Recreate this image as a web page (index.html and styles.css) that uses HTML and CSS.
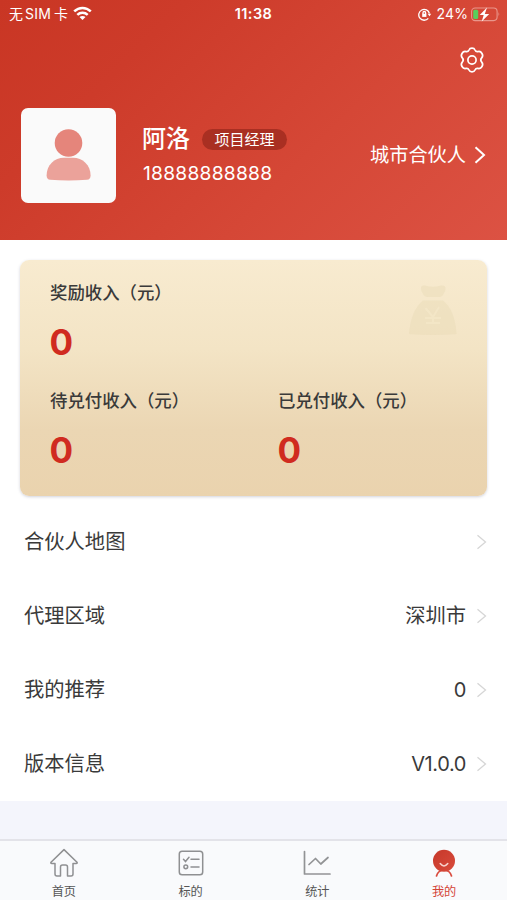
FILE: index.html
```html
<!DOCTYPE html>
<html lang="zh-CN">
<head>
<meta charset="utf-8">
<title>我的</title>
<link rel="stylesheet" href="styles.css">
</head>
<body>
<div class="app">
  <header class="hero">
    <div class="status">
      <div class="status-left">
        <span class="carrier">无<span class="sim">SIM</span>卡</span>
        <svg class="wifi" width="19" height="15" viewBox="0 0 19 15" fill="none" stroke="#fff" stroke-width="2.5"><path d="M1.2 5.4C6 .8 13 .8 17.8 5.4M4.3 8.8c3-2.800 7.400-2.800 10.400 0"/><path d="M6.500 11.100c1.800-1.600 4.200-1.600 6 0l-3 3z" fill="#fff" stroke="none"/></svg>
      </div>
      <div class="time">11:38</div>
      <div class="status-right">
        <svg width="14" height="13" viewBox="0 0 14 13" fill="none" stroke="#fff" stroke-width="1.300"><path d="M10.300 10.300A5.400 5.400 0 1 1 11.400 5.500"/><path d="M9.600 5.800h3.600l-1.700 2.500z" fill="#fff" stroke="none"/><path d="M5 6V4.800a1.300 1.300 0 0 1 2.600 0V6"/><path d="M4.200 5.700h4.200v3.200H4.200z" fill="#fff" stroke="none"/></svg>
        <span class="percent">24%</span>
        <svg class="battery" width="30" height="15" viewBox="0 0 30 15"><rect x=".6" y="1" width="25.500" height="12.600" rx="3.500" fill="none" stroke="#e9968b" stroke-width="1.100"/><path d="M27.500 5q1.800 2.300 0 4.600z" fill="#e9968b"/><rect x="2.200" y="2.700" width="5" height="9.200" rx="1.500" fill="#59cf5c"/><path d="M16 .4 8.700 8h4l-2 6.500L18.200 7h-4.400z" fill="#fff"/></svg>
      </div>
    </div>
    <div class="settings">
      <svg width="26" height="26" viewBox="0 0 26 26" fill="none" stroke="#fff" stroke-width="1.700" stroke-linejoin="round"><path d="M10 3q.7-1.800 3-1.800T16 3c.6 1.400 1.600 1.900 3 1.600 2-.5 3 .2 4 1.900s1 3-.3 4.400c-1 1.100-1 3.100 0 4.200 1.300 1.400 1.300 2.700.3 4.400s-2 2.400-4 1.900c-1.400-.3-2.400.2-3 1.600q-.7 1.800-3 1.800T10 23c-.6-1.400-1.600-1.900-3-1.600-2 .5-3-.2-4-1.900s-1-3 .3-4.400c1-1.100 1-3.100 0-4.200C2 9.500 2 8.200 3 6.500s2-2.400 4-1.900c1.400.3 2.400-.2 3-1.600z"/><circle cx="13" cy="13" r="4.100"/></svg>
    </div>
    <div class="profile">
      <div class="avatar">
        <svg width="46" height="54" viewBox="0 0 46 54"><circle cx="22.500" cy="15" r="13.800" fill="#e5857b"/><path d="M.6 47.500C.6 37 8.500 29.800 18 29.800h9c9.500 0 17.600 7.200 17.600 17.700q0 4-3.600 4.300-18.500 1.500-36.800 0Q.6 51.500.6 47.500z" fill="#eba29a"/></svg>
      </div>
      <div class="identity">
        <div class="name-row"><span class="name">阿洛</span><span class="role">项目经理</span></div>
        <div class="phone">18888888888</div>
      </div>
      <div class="partner"><span>城市合伙人</span>
        <svg width="12" height="18" viewBox="0 0 12 18" fill="none" stroke="#fff" stroke-width="2"><path d="M1.500 1.300 10 9l-8.500 7.700"/></svg>
      </div>
    </div>
  </header>

  <main class="content">
    <section class="card">
      <div class="stat stat-total"><div class="label">奖励收入（元）</div><div class="value">0</div></div>
      <div class="stat"><div class="label">待兑付收入（元）</div><div class="value">0</div></div>
      <div class="stat"><div class="label">已兑付收入（元）</div><div class="value">0</div></div>
      <svg class="bag" width="50" height="52" viewBox="0 0 50 52"><path d="M13 4q0-3 4-2.500 8 2.500 16 0 5-.5 4.500 3.500 0 2-1.500 4-1.500 4-5 4H20q-4 0-5.500-4Q13 7 13 4zM15 16.500h20Q47 26 48.500 50q-24 2-47.500 0Q3 26 15 16.500z" fill="#e9dcb8" fill-opacity=".5"/><path d="m17.500 24 7.500 9 6-10M25 33v7M17 34h16M18 39h14" fill="none" stroke="#f5e8c9" stroke-opacity=".7" stroke-width="2"/></svg>
    </section>

    <nav class="menu">
      <div class="item"><span>合伙人地图</span><span class="end"><svg class="chev" width="11" height="16" viewBox="0 0 11 16"><path d="m1.500 1.200 8 6.800-8 6.800"/></svg></span></div>
      <div class="item"><span>代理区域</span><span class="end">深圳市<svg class="chev" width="11" height="16" viewBox="0 0 11 16"><path d="m1.500 1.200 8 6.800-8 6.800"/></svg></span></div>
      <div class="item"><span>我的推荐</span><span class="end number">0<svg class="chev" width="11" height="16" viewBox="0 0 11 16"><path d="m1.500 1.200 8 6.800-8 6.800"/></svg></span></div>
      <div class="item"><span>版本信息</span><span class="end number">V1.0.0<svg class="chev" width="11" height="16" viewBox="0 0 11 16"><path d="m1.500 1.200 8 6.800-8 6.800"/></svg></span></div>
    </nav>
  </main>

  <footer class="tabs">
    <div class="tab">
      <svg width="30" height="30" viewBox="0 0 30 30" fill="none" stroke="#8f9092" stroke-width="1.500" stroke-linejoin="round"><path d="M15 1.600 2 14.200q-.7 1.300.8 1.300H6V26q0 2 2 2h3.500V19q0-2 2-2h3q2 0 2 2v9H22q2 0 2-2V15.500h3.200q1.500 0 .8-1.300z"/></svg>
      <span>首页</span>
    </div>
    <div class="tab">
      <svg width="30" height="30" viewBox="0 0 30 30" fill="none" stroke="#8f9092" stroke-width="1.500" stroke-linecap="round"><rect x="3.300" y="3.300" width="23.400" height="23.400" rx="2.800"/><path d="m7.500 11.300 2 2.200 3.500-4.200M15 11.300h8M15 19h8"/><circle cx="9.800" cy="18.800" r="1.900"/></svg>
      <span>标的</span>
    </div>
    <div class="tab">
      <svg width="30" height="30" viewBox="0 0 30 30" fill="none" stroke="#929395" stroke-width="1.700" stroke-linecap="round" stroke-linejoin="round"><path d="M2.500 3.500V26H28M7 16.500l6.500-6 5.300 5.500L26 9.500"/></svg>
      <span>统计</span>
    </div>
    <div class="tab active">
      <svg width="30" height="30" viewBox="0 0 30 30" fill="none"><defs><linearGradient id="face" x1="0" y1="0" x2="1" y2="1"><stop offset="0" stop-color="#c6382a"/><stop offset="1" stop-color="#d94b3c"/></linearGradient></defs><path d="M7.500 28q1.300-5.500 7.500-6 6.200.5 7.500 6" stroke="#d94b3e" stroke-width="1.700" stroke-linecap="round"/><circle cx="15" cy="12.700" r="11" fill="url(#face)"/><path d="M11.200 15.500q3.800 4.800 7.600 0" stroke="#f7d3cd" stroke-width="1.500" stroke-linecap="round"/></svg>
      <span>我的</span>
    </div>
  </footer>
</div>
</body>
</html>
```
FILE: styles.css
```css
* { box-sizing: border-box; }
body {
  margin: 0;
  font-family: Inter, "Noto Sans CJK SC", sans-serif;
  color: #3a3a3a;
}
svg { display: block; flex: none; }
.app {
  width: 507px;
  height: 900px;
  display: flex;
  flex-direction: column;
  background: #f4f5fc;
  overflow: hidden;
}
.hero {
  height: 240px;
  flex: none;
  color: #fff;
  background: linear-gradient(135deg, #c93624 0%, #cd3b2a 25%, #d54736 62%, #dc5243 100%);
}
.status {
  height: 28px;
  display: grid;
  grid-template-columns: 1fr auto 1fr;
  align-items: center;
  padding: 0 6px;
  font-size: 14px;
  line-height: 20px;
}
.status-left, .status-right { display: flex; align-items: center; }
.status-left { gap: 5px; padding-left: 3px; }
.status-right { justify-content: flex-end; }
.sim { margin: 0 3px 0 2px; letter-spacing: .2px; }
.wifi { margin-top: -2px; }
.time { font-size: 14.500px; font-weight: 600; letter-spacing: .4px; }
.percent { margin: 0 3px 0 5px; letter-spacing: .1px; }
.settings { display: flex; justify-content: flex-end; padding: 19px 22px 0 0; }
.profile { display: flex; align-items: center; margin-top: 34.500px; padding: 0 21px; height: 95px; }
.avatar {
  width: 95px;
  height: 95px;
  display: flex;
  align-items: center;
  justify-content: center;
  background: #fafafa;
  border-radius: 7px;
}
.identity { margin-left: 26px; }
.name-row { display: flex; align-items: center; height: 32px; gap: 12px; }
.name { font-size: 24px; line-height: 32px; font-weight: 500; }
.role {
  width: 85px;
  height: 21px;
  border-radius: 11px;
  background: #a92f22;
  text-align: center;
  font-size: 15px;
  line-height: 21px;
}
.phone { height: 32px; margin-left: 1px; font-size: 19.200px; line-height: 36px; letter-spacing: .25px; }
.partner { display: flex; align-items: center; gap: 8px; margin-left: auto; font-size: 19.200px; line-height: 28px; }
.content { height: 561px; flex: none; padding-top: 20px; background: #fff; }
.card {
  position: relative;
  display: grid;
  grid-template-columns: 228px 1fr;
  grid-template-rows: 108px 1fr;
  width: 467px;
  height: 236px;
  margin: 0 20px 9px;
  padding: 19px 0 0 30px;
  border-radius: 9px;
  background: linear-gradient(#f8ebd0, #f3e4c5 38%, #ebd6b3 72%, #ead3ae);
  box-shadow: 0 1px 3px rgba(70, 75, 110, .25);
}
.stat-total { grid-column: 1 / -1; }
.label { font-family: "Noto Sans CJK SC", sans-serif; font-size: 17.400px; line-height: 26px; font-weight: 500; white-space: nowrap; }
.value { margin-top: 15px; margin-left: -.5px; font-size: 35px; line-height: 44px; font-weight: 700; color: #d02b20; }
.bag { position: absolute; right: 29px; top: 24px; }
.item {
  height: 74px;
  display: flex;
  align-items: center;
  justify-content: space-between;
  padding: 0 20px 0 24px;
  font-size: 20.300px;
  line-height: 30px;
}
.end { display: flex; align-items: center; gap: 10px; }
.number { font-size: 20px; letter-spacing: -.4px; }
.chev { fill: none; stroke: #d6d6d6; stroke-width: 1.300; }
.tabs {
  height: 61px;
  flex: none;
  margin-top: auto;
  display: grid;
  grid-template-columns: repeat(4, 1fr);
  border-top: 2px solid #e3e3e9;
  background: #f9fafc;
}
.tab { display: flex; flex-direction: column; align-items: center; padding: 7px 0 0 1px; font-size: 12.200px; line-height: 18px; color: #555; }
.tab span { margin-top: 5px; }
.active { color: #d44437; }
```
